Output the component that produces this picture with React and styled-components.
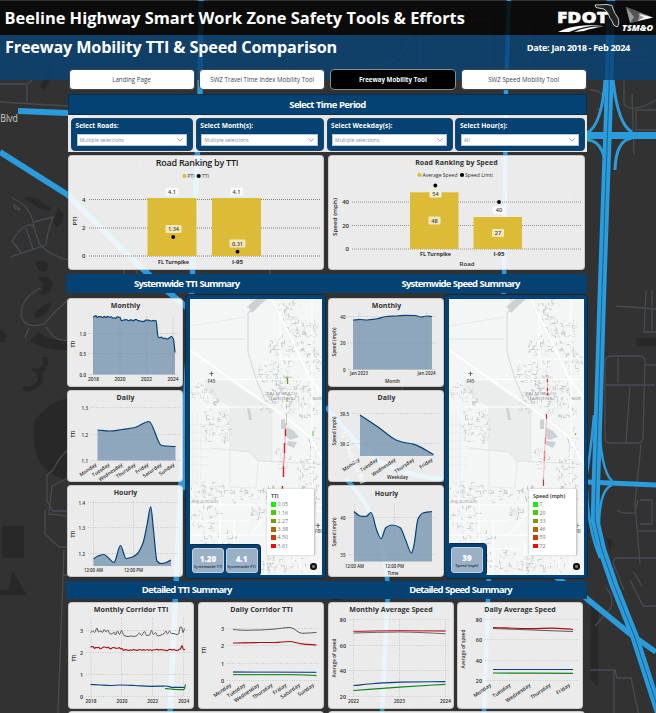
import React from 'react';
import styled, { createGlobalStyle, css } from 'styled-components';

const NAVY = '#044273';
const SANS = '"Open Sans", "Noto Sans", sans-serif';

const Global = createGlobalStyle`
  * { box-sizing: border-box; }
  html, body { margin: 0; padding: 0; background: #323232; }
  body { font-family: ${SANS}; overflow: hidden; }
  svg { display: block; }
  svg text { font-family: ${SANS}; }
`;

const Page = styled.div`
  position: relative;
  width: 656px;
  height: 713px;
  overflow: hidden;
`;

const Backdrop = styled.svg`
  position: absolute;
  inset: 0;
`;

const Content = styled.div`
  position: relative;
  display: flex;
  flex-direction: column;
  padding-top: 1px;
`;

const TopBar = styled.header`
  height: 34px;
  display: flex;
  align-items: center;
  justify-content: space-between;
  padding: 0 1px 0 4.5px;
  background: rgba(6, 6, 6, 0.88);
`;

const TitleText = styled.h1`
  margin: 0;
  color: #fff;
  font-size: 16.4px;
  line-height: 34px;
  font-weight: 700;
  white-space: nowrap;
`;

const SubBar = styled.div`
  height: 45px;
  display: flex;
  align-items: flex-start;
  justify-content: space-between;
  padding: 0 26px 0 5px;
  background: rgba(8, 66, 116, 0.82);
`;

const SubTitle = styled.h2`
  margin: 0;
  color: #fff;
  font-size: 16.2px;
  line-height: 25px;
  font-weight: 700;
  white-space: nowrap;
  letter-spacing: -0.15px;
`;

const DateText = styled.div`
  color: #fff;
  font-size: 9.2px;
  line-height: 26px;
  font-weight: 700;
  white-space: nowrap;
  letter-spacing: -0.36px;
`;

const Board = styled.main`
  display: flex;
  flex-direction: column;
  width: 521px;
  margin: -11px 0 0 66px;
`;

const Tabs = styled.nav`
  display: grid;
  grid-template-columns: repeat(4, 126px);
  column-gap: 4.7px;
  height: 21px;
  padding-left: 2.5px;
`;

const Tab = styled.button`
  padding: 0;
  border: 1px solid ${(p) => (p.$active ? '#8d8d8d' : '#3c4650')};
  border-radius: 4px;
  background: ${(p) => (p.$active ? '#000' : '#fff')};
  color: ${(p) => (p.$active ? '#fff' : '#444')};
  font-family: ${SANS};
  font-size: 6.2px;
  font-weight: ${(p) => (p.$active ? 700 : 500)};
  line-height: 19px;
  white-space: nowrap;
`;

const Band = styled.div`
  display: grid;
  grid-template-columns: ${(p) => (p.$split ? '241.5px 252px' : '1fr')};
  column-gap: 27px;
  margin: ${(p) => p.$margin};
  height: ${(p) => p.$h}px;
  line-height: ${(p) => p.$h}px;
  background: ${NAVY};
  ${(p) => p.$outlined && css`border: 1px solid #06304f; line-height: ${p.$h - 2}px;`}
  color: #fff;
  text-align: center;
  font-size: 9.5px;
  font-weight: 700;
  letter-spacing: ${(p) => (p.$outlined ? '-0.68px' : '-0.8px')};
  word-spacing: 0.6px;
  white-space: nowrap;
`;

const Filters = styled.div`
  display: grid;
  grid-template-columns: 122px 128px 126px 129.5px;
  column-gap: 2.8px;
  height: 37px;
  margin-left: 2px;
  padding: 3px;
  background: rgba(255, 255, 255, 0.88);
`;

const FilterBox = styled.label`
  display: flex;
  flex-direction: column;
  padding: 2px 5px 4px 3.5px;
  border: 1px solid #22435f;
  border-radius: 4px;
  background: ${NAVY};
  color: #fff;
  font-size: 6.6px;
  font-weight: 700;
  line-height: 9px;
`;

const SelectBox = styled.div`
  display: flex;
  align-items: center;
  justify-content: space-between;
  height: 12px;
  margin: 3.5px 0 0 1px;
  padding: 0 3px 0 2px;
  border: 1px solid #b9c6d2;
  background: #fff;
  color: #8a8a8a;
  font-size: 5.1px;
  font-weight: 400;
  line-height: 10px;
`;

const Row = styled.section`
  display: grid;
  grid-template-columns: ${(p) => p.$cols};
  margin: ${(p) => p.$margin};
  height: ${(p) => p.$h}px;
`;

const Panel = styled.article`
  grid-column: ${(p) => p.$col || 'auto'};
  overflow: hidden;
  border: 1px solid rgba(190, 190, 190, 0.75);
  border-radius: 4px;
  background: rgba(255, 255, 255, 0.9);
`;

const PanelTitle = styled.h3`
  margin: 0 0 0 ${(p) => p.$shift || 0}px;
  height: 13px;
  text-align: center;
  white-space: nowrap;
  color: ${(p) => p.$color || '#333'};
  font-size: ${(p) => p.$size || 7}px;
  line-height: ${(p) => p.$line || 13}px;
  font-weight: ${(p) => p.$weight || 700};
  letter-spacing: ${(p) => p.$track || 0}px;
`;

const Stack = styled.div`
  grid-column: ${(p) => p.$col};
  display: grid;
  grid-template-rows: 89px 92px 92px;
  row-gap: 3px;
  padding-top: 3px;
`;

const MapFrame = styled.div`
  grid-column: ${(p) => p.$col};
  position: relative;
  overflow: hidden;
  border: 4px solid ${NAVY};
  border-bottom-width: 3px;
  border-right-width: 3px;
  border-radius: 4px;
  background: #f4f5f5;
  box-shadow: 0 0 0 1px #0a2c49;
`;

const Legend = styled.div`
  position: absolute;
  left: ${(p) => p.$left}px;
  top: 190px;
  width: 48px;
  height: 66px;
  padding: 3px 4px;
  background: #fff;
  border-right: 1px solid #c9c9c9;
  box-shadow: 0 0 2px #bbb;
  color: #222;
  font-size: 5.3px;
  font-weight: 600;
  line-height: 8.3px;
  white-space: nowrap;
`;

const LegendItem = styled.div`
  display: flex;
  align-items: center;
  gap: 2px;
  height: 8.3px;
  color: #777;
  font-weight: 400;
  &::before {
    content: '';
    width: 4.5px;
    height: 4.5px;
    background: ${(p) => p.$color};
  }
`;

const Stats = styled.div`
  position: absolute;
  left: -1px;
  bottom: 0;
  display: flex;
  gap: 1.5px;
  height: ${(p) => p.$h}px;
  padding: 3px 2.5px 2px 3px;
  border-radius: 3px;
  background: ${NAVY};
  box-shadow: 0 0 0 1px #0a2c49;
`;

const Stat = styled.div`
  width: 32px;
  border: 1px solid #c3d0dd;
  border-radius: 3px;
  background: #9ab0c6;
  color: #fff;
  text-align: center;
  font-size: 8px;
  font-weight: 800;
  line-height: 9px;
  padding-top: 4.5px;
  small {
    display: block;
    margin: 1px -4px 0;
    color: #203040;
    font-size: 3.8px;
    line-height: 6px;
    font-weight: 600;
    white-space: nowrap;
  }
`;

const InfoDot = styled.span`
  position: absolute;
  left: ${(p) => p.$left}px;
  top: 264px;
  width: 6.5px;
  height: 6.5px;
  border-radius: 50%;
  border: 2px solid #111;
  background: #777;
`;

const T = ({ x, y, children, size = 5.6, w, weight = 600, fill = '#2e2e2e', anchor = 'middle', rot }) => (
  <text
    x={x}
    y={y}
    fontSize={size}
    fontWeight={weight}
    fill={fill}
    textAnchor={anchor}
    textLength={w}
    lengthAdjust={w ? 'spacingAndGlyphs' : undefined}
    transform={rot ? `rotate(${rot} ${x} ${y})` : undefined}
  >
    {children}
  </text>
);

/* Smooth monotone path through the points */
const curve = (pts) => {
  const n = pts.length;
  const s = [];
  for (let i = 0; i < n - 1; i++) s.push((pts[i + 1][1] - pts[i][1]) / (pts[i + 1][0] - pts[i][0]));
  const m = pts.map((_, i) => {
    if (i === 0) return s[0];
    if (i === n - 1) return s[n - 2];
    return s[i - 1] * s[i] <= 0 ? 0 : (2 * s[i - 1] * s[i]) / (s[i - 1] + s[i]);
  });
  let d = `M${pts[0]}`;
  for (let i = 0; i < n - 1; i++) {
    const h = (pts[i + 1][0] - pts[i][0]) / 3;
    d += `C${pts[i][0] + h},${pts[i][1] + m[i] * h} ${pts[i + 1][0] - h},${pts[i + 1][1] - m[i + 1] * h} ${pts[i + 1]}`;
  }
  return d;
};

const Series = ({ pts, color, width = 1 }) => (
  <path d={curve(pts)} fill="none" stroke={color} strokeWidth={width} />
);

const Area = ({ pts, base }) => (
  <>
    <path
      d={`${curve(pts)}L${pts[pts.length - 1][0]},${base}L${pts[0][0]},${base}Z`}
      fill="#7393ae"
      fillOpacity="0.78"
    />
    <Series pts={pts} color={NAVY} width={1.2} />
  </>
);

const Grid = ({ ys = [], xs = [], x1, x2, y1, y2, tickX, color = '#c6c6c6', dash = '1 1.4', size }) => (
  <g>
    {ys.map(([y, label]) => (
      <React.Fragment key={label}>
        <line x1={x1} x2={x2} y1={y} y2={y} stroke={color} strokeWidth="0.9" strokeDasharray={dash} />
        <T x={tickX} y={y + 2} anchor="end" size={size || 5}>{label}</T>
      </React.Fragment>
    ))}
    {xs.map((x) => (
      <line key={x} x1={x} x2={x} y1={y1} y2={y2} stroke={color} strokeWidth="0.9" strokeDasharray={dash} />
    ))}
  </g>
);

const Chart = ({ box, title, col, children, ...t }) => {
  const [x, y, w, h] = box;
  return (
    <Panel $col={col}>
      <PanelTitle {...t}>{title}</PanelTitle>
      <svg width={w - 2} height={h - 15} viewBox={`${x + 1} ${y + 14} ${w - 2} ${h - 15}`}>
        {children}
      </svg>
    </Panel>
  );
};

const Tag = ({ x, y, w = 13, fill = '#f1e7bd', children }) => (
  <>
    <rect x={x - w / 2} y={y - 4} width={w} height="8" rx="1.2" fill={fill} />
    <T x={x} y={y + 2} size="5.6" fill="#444">{children}</T>
  </>
);

const DAYS = ['Monday', 'Tuesday', 'Wednesday', 'Thursday', 'Friday', 'Saturday', 'Sunday'];
const DayLabels = ({ xs, y, size = 5 }) =>
  xs.map((x, i) => (
    <T key={i} x={x} y={y} size={size} anchor="end" rot={-35}>{DAYS[i]}</T>
  ));

const rng = (seed) => () => {
  seed = (seed + 0x6d2b79f5) | 0;
  let t = Math.imul(seed ^ (seed >>> 15), 1 | seed);
  t = (t + Math.imul(t ^ (t >>> 7), 61 | t)) ^ t;
  return ((t ^ (t >>> 14)) >>> 0) / 4294967296;
};

/* Neighbourhoods: centre x, centre y, radius x, radius y, number of street pieces */
const CLUSTERS = [
  [98, 8, 12, 14, 34], [116, 34, 14, 18, 52], [122, 60, 10, 14, 32], [90, 48, 14, 10, 32],
  [84, 72, 18, 14, 52], [98, 92, 24, 15, 90], [112, 110, 16, 10, 34], [78, 104, 8, 12, 26],
  [8, 92, 9, 8, 20], [23, 98, 6, 8, 20], [18, 124, 5, 20, 26], [34, 128, 7, 18, 40],
  [92, 158, 8, 14, 20], [118, 176, 13, 18, 46], [8, 192, 9, 14, 24], [24, 192, 12, 9, 26],
  [16, 218, 16, 14, 40], [50, 196, 14, 8, 18], [66, 212, 6, 8, 24], [76, 192, 8, 10, 16],
  [28, 238, 20, 9, 28], [78, 266, 8, 10, 36], [50, 262, 18, 13, 38], [118, 212, 14, 20, 30],
  [98, 264, 20, 10, 20], [124, 142, 7, 15, 18], [102, 26, 6, 12, 14], [62, 6, 6, 6, 8],
];

const STREETS = (() => {
  const r = rng(77);
  const dark = [];
  const light = [];
  const step = () => ((r() < 0.5 ? -1 : 1) * (1 + r() * 2.6)).toFixed(1);
  CLUSTERS.forEach(([cx, cy, rx, ry, n]) => {
    for (let i = 0; i < n; i++) {
      const a = r() * 6.283;
      const k = Math.sqrt(r());
      const x = Math.round(cx + Math.cos(a) * rx * k) + 0.5;
      const y = Math.round(cy + Math.sin(a) * ry * k) + 0.5;
      const d = r();
      let seg = `M${x},${y}`;
      if (d < 0.35) seg += `h${step()}v${step()}`;
      else if (d < 0.6) seg += `v${step()}h${step()}`;
      else if (d < 0.75) seg += `h${step()}`;
      else if (d < 0.9) seg += `v${step()}`;
      else seg += `l${step()},${step()}`;
      (r() < 0.42 ? dark : light).push(seg);
    }
  });
  return { dark: dark.join(''), light: light.join('') };
})();

const AreaMap = ({ route }) => (
  <svg width="136" height="276" viewBox="0 0 136 276">
    <rect width="136" height="276" fill="#f4f5f5" />
    <path d="M15,81L38,81L78,108L82,108L82,162L68,162L60,153L40,151L40,108L15,92Z" fill="#ebecec" />
    <g fill="none" strokeWidth="0.9">
      <path d="M77,0L58,14V53L66,80L78,108" stroke="#cfd3d4" />
      <path d="M20,149L60,153L68,162L132,165M56,40H0" stroke="#d8dbdb" strokeWidth="0.7" />
      <path d="M40,108V188L66,189L68,162M82,108V162M0,27L56,18" stroke="#e2e4e4" strokeWidth="0.7" />
      <path d="M3,112V186M7,112V186M11,120V186M0,126H26M0,134H26M0,142H26M0,150H26M0,158H18M0,166H18" stroke="#e6e8e8" strokeWidth="0.6" />
      <path d={STREETS.light} stroke="#dfe2e3" />
      <path d={STREETS.dark} stroke="#c0c8ca" strokeWidth="0.8" />
    </g>
    <path d="M59,6L66,0L76,0L62,14ZM91,121L95,120L95,130L91,130ZM97,128L104,132L109,138L100,141L96,137ZM98,142L107,143L104,149L97,146ZM57,108L60,110L62,121L59,121Z" fill="#ccd2d4" />
    <g fill="none" stroke="#fff" strokeWidth="1.1">
      <path d="M23,80.500H132M15,108H84M0,206H136M0,222H60M0,236H136M30,200V276M44,222V276M104,200V260M122,0V276M0,250H70M60,236L80,212L136,212M90,8V60H136M76,240V276M110,246V276" />
    </g>
    <g fill="none" stroke="#fff" strokeWidth="1.7">
      <path d="M0,51L98,120L120,138L132,160L136,166" />
      <path d="M82,0L102,41L120,79L136,100" />
    </g>
    <path d="M21.500,72.500v4.500M19.300,74.500h4.400M128,224.500v4.500M125.800,226.500h4.400" fill="none" stroke="#555" strokeWidth="0.8" />
    <T x={21.5} y={83.500} size={4.6} fill="#555">F45</T>
    <T x={128.300} y={233.500} size={4.6} fill="#555" w={7}>FBI</T>
    <T x={92} y={96} size={4.2} weight={400} fill="#999" w={31}>PALM BEACH</T>
    <T x={91} y={101} size={4.2} weight={400} fill="#999" w={25}>GARDENS</T>
    <T x={127} y={101} size={4.2} weight={400} fill="#888" w={9}>NOR</T>
    <T x={15} y={204} size={4} weight={400} fill="#aaa" w={27}>THE ACREAGE</T>
    {route.map(([d, c, w], i) => (
      <path key={i} d={d} fill="none" stroke={c} strokeWidth={w || 1} />
    ))}
  </svg>
);

const TTI_ROUTE = [
  ['M97.500,79V85', '#6f9a1f', 1.3], ['M95.500,79l3,-1.500M97,99v4', '#8fae45', 1.2],
  ['M96.500,105v5M96.500,114v12', '#a9d69a', 0.9], ['M95.500,124V130L95,146', '#efa3a3', 0.9],
  ['M95.500,130v7M94.500,144v10M93.500,167v11M92.500,187v4', '#dd1c22', 1.4],
  ['M94.500,154L93.500,167', '#f08a8a', 1.1], ['M123,132v5', '#6cd64c', 1.2],
];
const SPEED_ROUTE = [
  ['M96.500,77h3', '#9aa54a', 1], ['M98.500,79V97', '#eba0a0', 0.8],
  ['M98.500,80v3M98.500,89v3M98.500,94v2M97.500,115v5M96.500,138v7M95.500,152v10M94.500,179v8', '#dc2b30', 1.2],
  ['M97.500,120L96.500,140L95.500,155L94.500,181', '#f0a9a9', 0.8], ['M126.500,134v2', '#8fae45', 1.2],
];
const RAMP = ['#12f312', '#4cc80e', '#789c06', '#a46c04', '#d03a06', '#fb0606'];

const MapCard = ({ col, route, legendLeft, legendTitle, values, stats, statH, pin }) => (
  <MapFrame $col={col}>
    <AreaMap route={route} />
    <Legend $left={legendLeft}>
      {legendTitle}
      {values.map((v, i) => (
        <LegendItem key={v} $color={RAMP[i]}>{v}</LegendItem>
      ))}
    </Legend>
    <Stats $h={statH}>
      {stats.map(([v, label]) => (
        <Stat key={label}>{v}<small>{label}</small></Stat>
      ))}
    </Stats>
    <InfoDot $left={pin} />
  </MapFrame>
);

const wiggle = (x1, x2, n, f) => {
  const r = rng(Math.round(x1 * 31 + n));
  return Array.from({ length: n }, (_, i) => {
    const t = i / (n - 1);
    return [x1 + (x2 - x1) * t, f(t, r)];
  });
};

const monthlyTti = [
  ...wiggle(93, 120, 20, (t, r) => 316.3 + t * 1.5 + (r() - 0.5) * 2),
  ...wiggle(121.5, 156, 24, (t, r) => 320 + t * 1 + (r() - 0.5) * 1.8),
  [158, 336.5], [159.5, 337.8], [161.500, 337], [163, 338.6], [165, 338], [167, 339], [169, 338], [171.500, 336.500], [173.500, 339.500], [175, 352.500],
];
const corridorTop = [
  [90.5, 632.5], [93, 631], [94.5, 632.5], [97, 628], [98.5, 632], [101, 631], [102.500, 632.5], [104, 629.5], [106, 632], [108, 630], [109.500, 633.500], [112, 634], [114, 632], [115.500, 635], [117.500, 631], [119.500, 634.5], [121.5, 630.5], [124, 635.500], [128, 636.500], [131, 636], [134, 636.500], [137, 635.500], [139.500, 633], [141.5, 635.500], [144.5, 631.5], [146.500, 635.5], [149.5, 635], [151.5, 630.5], [153.500, 634.500], [155.5, 632.5], [157.500, 636], [161, 635], [164, 633.500], [166, 631], [167.500, 634], [169.5, 631], [171.500, 633.5], [174, 633.500], [176, 634.500], [178.5, 634], [180.3, 627], [181.5, 627], [183, 632.5], [184.500, 628.5],
];
const corridorMid = [
  ...wiggle(90.5, 122, 24, (t, r) => 647.3 + t * 1.2 + (r() - 0.5) * 2.4),
  ...wiggle(123.5, 179, 34, (t, r) => 650 + (r() - 0.5) * 1.3),
  [180.500, 649], [182, 645.500], [183.500, 649.800], [185, 649.500],
];

const GRAY = '#585858';
const RED = '#a80c10';
const GREEN = '#15831f';
const BLUE = '#07427c';

const RoadMap = () => (
  <Backdrop width="656" height="713" viewBox="0 0 656 713">
    <rect width="656" height="713" fill="#323232" />
    <g fill="#282828">
      <path d="M24,198q14,-3 20,6l8,5q-8,3 -15,-2zM58,208l6,6l-2,8l-5,6l-4,-6l3,-7zM35,263q8,-6 13,2q-1,11 -10,4zM37,278q15,-4 16,7q-3,11 -14,9q9,-10 -2,-16zM34,315q8,-12 17,-12q-2,12 -16,16zM38,332q14,11 30,7v11q-22,1 -38,-9zM35,420q14,-18 33,-22v82q-12,-2 -22,-10q-16,-16 -11,-50zM2,526h22v32h-22zM12,570l15,25h-27v-5h9zM0,330q9,3 5,12h-5z" />
      <path d="M40,86q8,-9 8,-22l6,2q-4,18 -10,24zM636,338h20v8h-19zM607,538l6,2l-3,12zM330,585h12v15h-12zM591,600l7,7v80l-8,-9z" />
      <path d="M45,357q2,14 -8,14q8,8 -1,15q-7,5 -13,2" fill="none" stroke="#282828" strokeWidth="5" />
    </g>
    <g fill="none" stroke="#474b50" strokeWidth="1.3">
      <path d="M0,84H24q6,0 8,-4M27,84v18M0,102L68,106M12,198q20,8 22,30l5,15q9,12 29,17M34,222l19,-5q-6,16 -7,28l-36,12M14,205l6,4q-6,2 -6,-5M12,241q14,-22 22,-14M12,241l10,13M26,228l7,21M40,288q-22,12 -18,30q4,11 22,6q14,-16 24,-24M29,328l-4,10M46,327q10,16 22,13" />
      <path d="M68,450q-8,6 -15,20l-6,5v26l6,10h15M68,478l-16,8l-3,28l19,2M45,510v24l14,13h9M64,550l-6,163M62,575h12" />
      <path d="M195,0h12v15h60q25,8 20,60M140,50q-15,-6 -10,-20h50M260,50h80M340,26q40,-20 70,10q-8,30 -40,30M420,5v60M450,20h40v50M530,24v44M560,48h40v25M624,80v24q8,10 32,-4M632,94l2,60M656,110h-20v20h20M590,90q16,0 14,16l-8,4M616,48h36M616,60h36M640,48v24" />
      <path d="M605,362v76q0,5 5,5h28q5,0 5,-6l2,-76q0,-4 -5,-5h-28q-7,0 -7,6M605,385h50M630,386l-4,57M618,358v25M644,365h12M641,444l-6,60l5,60M616,306l40,3M646,290l-2,42h12M652,290v40M640,500h12v24h-12M617,510q4,4 18,3l3,-13M656,558h-38q-6,0 -4,7l10,25M634,572l8,14M637,531h19M630,580l13,26h13M590,670h25l2,8h14l8,38M614,670v43M606,588q8,8 5,20l-16,18" />
      <path d="M90,155v40q30,8 34,50v35M140,155l-3,120M208,175h40l12,60M270,155v120M300,170h23M350,160q-20,50 10,110M420,158v110M540,160q30,6 30,50t-30,50M330,350h110M345,300v80M410,300l-8,90M350,500h80v40M100,610q8,30 -8,99M110,520q-30,12 -26,50M140,610v99M230,660h90M260,605v104M340,660q60,-30 100,0M480,640h102v60M410,670v40" />
    </g>
    <g fill="none" stroke="#2b9cdb">
      <path d="M201,0L200,94L197,160L192,285L180,500L170,713" strokeWidth="5.500" />
      <path d="M509,0L506,92L504,290L500,320M489,570L484,713M388,590L382,713" strokeWidth="4.500" />
      <path d="M18,111L68,113L88,115" strokeWidth="6" />
      <path d="M0,152L68,195L128,255L160,285L190,310L183,490" strokeWidth="6" />
      <path d="M326,407L363,450Q390,475 450,480M345,478Q388,520 388,600" strokeWidth="4.500" />
      <path d="M611,0L609,90L602,290L598,420L596,480L595,520L602,550L614,585L634,635L660,715" strokeWidth="8.500" />
      <path d="M605,80Q602,125 587,133M613,80Q618,125 632,132M587,140Q602,140 606,165M632,138Q616,140 615,170" strokeWidth="3" />
      <path d="M587,135.500H656" strokeWidth="7" />
      <path d="M587,482L656,485" strokeWidth="5" />
      <path d="M594,415Q589,470 582,500M599,415Q600,470 612,481M612,485Q598,490 599,535M587,490Q588,530 600,558" strokeWidth="2.500" />
      <path d="M550,573L586,598L629,633L656,652" strokeWidth="5.500" />
    </g>
    <path d="M611,0L609,90L602,290L598,420L596,480L595,520L602,550L614,585L634,635L660,715" fill="none" stroke="#176391" strokeWidth="1" />
    <T x={0.300} y={122} size={10} anchor="start" weight={400} fill="#cfcfcf" w={17.500}>Blvd</T>
  </Backdrop>
);

const RoadName = styled.svg`
  position: absolute;
  left: 328px;
  top: 390px;
  pointer-events: none;
`;

const Logos = () => (
  <svg width="100" height="34" viewBox="555 1 100 34">
    <text x="557" y="23.300" fontSize="16.500" fontWeight="800" fill="#fff" stroke="#fff" strokeWidth="0.4" textLength="51" lengthAdjust="spacingAndGlyphs">FDOT</text>
    <path d="M558,32Q572,24 603,25Q582,26 569,32ZM574,32Q586,26 604,26.500Q592,28 584,31Z" fill="#fff" />
    <path d="M595,5L607,4.500L612,5.500L613,9Q615,14 618,18Q620,24 617,27Q613,26 612,21L610,18Q608,11 604,9L596,7.500Z" fill="#222" stroke="#ddd" strokeWidth="0.9" />
    <path d="M626,7L653,17.500L630,23Z" fill="#9a9a9a" />
    <path d="M626,7L640,12.500L638,21L630,23L634,17Z" fill="#555" />
    <path d="M638,14L653,17.500L637,21L644,17.500Z" fill="#fff" />
    <text x="622" y="31" fontSize="9.500" fontWeight="800" fontStyle="italic" fill="#fff" textLength="31" lengthAdjust="spacingAndGlyphs">TSM&amp;O</text>
  </svg>
);

const Chevron = () => (
  <svg width="6" height="4" viewBox="0 0 6 4">
    <path d="M0.500,0.500L3,3.200L5.500,0.500" fill="none" stroke="#777" strokeWidth="0.7" />
  </svg>
);

const FILTERS = [
  ['Select Roads:', 'Multiple selections'],
  ['Select Month(s):', 'Multiple selections'],
  ['Select Weekday(s):', 'Multiple selections'],
  ['Select Hour(s):', 'All'],
];

export default function App() {
  return (
    <Page>
      <Global />
      <RoadMap />
      <Content>
        <TopBar>
          <TitleText>Beeline Highway Smart Work Zone Safety Tools &amp; Efforts</TitleText>
          <Logos />
        </TopBar>
        <SubBar>
          <SubTitle>Freeway Mobility TTI &amp; Speed Comparison</SubTitle>
          <DateText>Date: Jan 2018 - Feb 2024</DateText>
        </SubBar>
        <Board>
          <Tabs>
            <Tab>Landing Page</Tab>
            <Tab>SWZ Travel Time Index Mobility Tool</Tab>
            <Tab $active>Freeway Mobility Tool</Tab>
            <Tab>SWZ Speed Mobility Tool</Tab>
          </Tabs>
          <Band $h={21} $outlined $margin="4px 0 0 2px"><span>Select Time Period</span></Band>
          <Filters>
            {FILTERS.map(([label, value]) => (
              <FilterBox key={label}>
                {label}
                <SelectBox>{value}<Chevron /></SelectBox>
              </FilterBox>
            ))}
          </Filters>

          <Row $h={115} $cols="256px 4px 257px" $margin="3px 0 0 2px">
            <Chart box={[68, 155, 256, 115]} title="Road Ranking by TTI" $size={9} $weight={600} $line={14} $color="#1c1c1c" $shift={2} $track={-0.27}>
              <Grid ys={[[199.500, '4'], [228, '2'], [256, '0']]} x1={89} x2={320} tickX={85.500} color="#777" dash="1 1" size={6} />
              <circle cx="184.500" cy="176" r="2.100" fill="#dcbc37" />
              <T x={187.500} y={178} anchor="start" size={5.4} weight={400} w={7}>PTI</T>
              <circle cx="198.700" cy="176" r="2.100" fill="#000" />
              <T x={202} y={178} anchor="start" size={5.4} weight={400} w={7}>TTI</T>
              <rect x="147.500" y="198" width="49" height="58" fill="#dcbc37" />
              <rect x="212" y="198" width="49" height="58" fill="#dcbc37" />
              <Tag x={172} y={191.500} fill="#fafafa">4.1</Tag>
              <Tag x={236.500} y={191.500} fill="#fafafa">4.1</Tag>
              <Tag x={173.500} y={229} w={16}>1.34</Tag>
              <Tag x={237.500} y={243.500} w={16}>0.31</Tag>
              <circle cx="173.200" cy="237" r="1.900" />
              <circle cx="237.500" cy="251.700" r="1.900" />
              <T x={173.500} y={264} weight={700} w={31}>FL Turnpike</T>
              <T x={237.500} y={264} weight={700} w={11}>I-95</T>
              <T x={77} y={221} rot={-90} size={6}>PTI</T>
            </Chart>
            <Chart col="3" box={[328, 155, 257, 115]} title="Road Ranking by Speed" $size={7} $track={0.08}>
              <Grid ys={[[202, '40'], [225.500, '20'], [249, '0']]} x1={352} x2={582} tickX={349} color="#888" dash="1 1" size={6} />
              <circle cx="419.500" cy="175" r="2.100" fill="#dcbc37" />
              <T x={422.500} y={177} anchor="start" size={5.6} weight={400} w={35}>Average Speed</T>
              <circle cx="462" cy="175" r="2.100" />
              <T x={465} y={177} anchor="start" size={5.6} weight={400} w={28}>Speed Limit</T>
              <rect x="410" y="192.300" width="48.500" height="56.700" fill="#dcbc37" />
              <rect x="473.500" y="217" width="48.500" height="32" fill="#dcbc37" />
              <circle cx="435.300" cy="185.500" r="1.900" />
              <circle cx="499" cy="202" r="1.900" />
              <Tag x={435.500} y={193.500} w={12} fill="#f7f1d8">54</Tag>
              <Tag x={434.500} y={220.500} w={12}>48</Tag>
              <Tag x={499} y={210.300} w={12} fill="#fafafa">40</Tag>
              <Tag x={498} y={233} w={12}>27</Tag>
              <T x={435.500} y={256.300} weight={700} w={31}>FL Turnpike</T>
              <T x={499} y={256.300} weight={700} w={11}>I-95</T>
              <T x={467} y={266.300} size={6} w={15}>Road</T>
              <T x={337} y={217} rot={-90} size={6} w={38}>Speed (mph)</T>
            </Chart>
          </Row>

          <Band $h={19} $split $margin="4px 0 0 0"><span>Systemwide TTI Summary</span><span>Systemwide Speed Summary</span></Band>

          <Row $h={283} $cols="116px 3px 139px 3px 116px 1px 142px" $margin="2px 0 0 1px">
            <Stack $col="1">
              <Chart box={[67, 298, 116, 89]} title="Monthly" $shift={1}>
                <Area base={374.500} pts={monthlyTti} />
                <Grid ys={[[333.500, '1.0'], [353.500, '0.5'], [374.500, '0.0']]} xs={[93.500, 120, 146.500, 173]} x1={88} x2={179} y1={316} y2={375} tickX={86} color="rgba(130,130,130,.4)" size={4.500} />
                {[2018, 2020, 2022, 2024].map((v, i) => <T key={v} x={93.500 + i * 26.500} y={381} size={5.2} w={11}>{v}</T>)}
                <T x={74.500} y={344} rot={-90} size={4.800}>TTI</T>
              </Chart>
              <Chart box={[67, 390, 116, 92]} title="Daily" $shift={1} $track={0.1}>
                <Grid ys={[[407.500, '1.3'], [434.500, '1.2'], [460.500, '1.1']]} x1={91} x2={181} tickX={88} size={4.500} />
                <Area base={460.500} pts={[[97.5, 430], [110, 431], [122, 429.5], [135, 427.5], [149, 421.5], [161.5, 445.5], [175.5, 446.5]]} />
                <DayLabels xs={[97, 110, 123, 136, 149, 162, 175]} y={465.500} />
                <T x={74.500} y={434} rot={-90} size={4.800}>TTI</T>
              </Chart>
              <Chart box={[67, 485, 116, 92]} title="Hourly" $shift={1}>
                <Grid ys={[[502.500, '1.4'], [527.500, '1.3'], [553.500, '1.2']]} xs={[93.500, 133.500]} x1={88} x2={178} y1={501} y2={566} tickX={85} size={4.500} />
                <Area base={566} pts={[[93.5, 559], [98, 556], [104, 554.5], [109, 558.5], [114, 562.5], [120.5, 545.5], [126, 558.5], [131, 557.5], [137, 554], [143, 543], [147, 525], [150.700, 506.8], [153.5, 530], [157, 561], [161, 563.500], [165, 563], [171, 560]]} />
                <T x={93.500} y={572.300} size={4.600} w={19}>12:00 AM</T>
                <T x={133.500} y={572.300} size={4.600} w={19}>12:00 PM</T>
                <T x={74.500} y={534} rot={-90} size={4.800}>TTI</T>
              </Chart>
            </Stack>
            <MapCard
              col="3" route={TTI_ROUTE} legendLeft={77} legendTitle="TTI" pin={120}
              values={['0.05', '1.16', '2.27', '3.38', '4.50', '5.61']}
              stats={[['1.20', 'Systemwide TTI'], ['4.1', 'Systemwide PTI']]} statH={30}
            />
            <Stack $col="5">
              <Chart box={[328, 298, 116, 89]} title="Monthly" $shift={1}>
                <Area base={369.500} pts={[[353, 320], [360, 319.5], [367, 320], [376, 319], [386, 316.5], [397, 316], [405, 315.300], [415, 315.500], [421, 317], [427, 316], [432, 316.500]]} />
                <Grid ys={[[316.500, '40'], [343, '20'], [369.500, '0']]} xs={[359, 426.500]} x1={348} x2={436} y1={313} y2={370} tickX={345.500} color="rgba(130,130,130,.4)" size={4.500} />
                <T x={359} y={375.300} size={4.500} w={18}>Jan 2023</T>
                <T x={426.500} y={375.300} size={4.500} w={18}>Jan 2024</T>
                <T x={392.500} y={383} size={5.200} w={15}>Month</T>
                <T x={335.500} y={342} rot={-90} size={4.800} w={29}>Speed (mph)</T>
              </Chart>
              <Chart box={[328, 390, 116, 92]} title="Daily" $shift={1} $track={0.1}>
                <Grid ys={[[413.500, '39.5'], [443.500, '39.0']]} x1={352} x2={441} tickX={349} size={4.500} />
                <Area base={456} pts={[[360, 415], [378, 427], [396, 440], [404, 442.500], [414, 444.300], [433.500, 454.500]]} />
                <DayLabels xs={[360, 378, 396, 414.500, 433]} y={460.500} />
                <T x={397.500} y={479} size={5.200} w={21}>Weekday</T>
                <T x={335.500} y={431} rot={-90} size={4.800} w={29}>Speed (mph)</T>
              </Chart>
              <Chart box={[328, 485, 116, 92]} title="Hourly" $shift={1} $line={15}>
                <Grid ys={[[517.500, '40'], [554.500, '35']]} xs={[354.500, 394.500]} x1={349} x2={436} y1={504} y2={561} tickX={345.500} size={4.500} />
                <Area base={561.500} pts={[[354, 511.500], [360, 516], [366, 516.500], [371, 512.500], [377, 531], [381, 538.700], [386, 527.500], [392, 525], [400, 527.500], [406, 541], [411.500, 553], [414, 545], [418, 519], [423, 513], [432, 511.500]]} />
                <T x={354.500} y={567.500} size={4.600} w={19}>12:00 AM</T>
                <T x={394.500} y={567.500} size={4.600} w={19}>12:00 PM</T>
                <T x={393} y={575} size={5.200} w={11}>Time</T>
                <T x={335.500} y={532} rot={-90} size={4.800} w={29}>Speed (mph)</T>
              </Chart>
            </Stack>
            <MapCard
              col="7" route={SPEED_ROUTE} legendLeft={80} legendTitle="Speed (mph)" pin={124}
              values={['7', '20', '33', '46', '59', '72']}
              stats={[['39', 'Speed (mph)']]} statH={31}
            />
          </Row>

          <Band $h={18} $split $margin="3px 0 0 0"><span>Detailed TTI Summary</span><span>Detailed Speed Summary</span></Band>

          <Row $h={107} $cols="126px 4px 126px 4px 126px 3px 126px" $margin="3px 0 0 2px">
            <Chart box={[68, 602, 126, 107]} title="Monthly Corridor TTI" $size={7.2}>
              <Grid ys={[[630.500, '3'], [652.500, '2'], [674.500, '1'], [696.500, '0']]} xs={[91, 121.500, 152.500, 183.500]} x1={86} x2={190} y1={618} y2={697} tickX={83} size={5.400} />
              <Series color={GRAY} pts={corridorTop} />
              <Series color={RED} pts={corridorMid} width={1.100} />
              <Series color={BLUE} pts={[[90.500, 684.500], [100, 685], [110, 685.500], [120, 685], [135, 685.500], [150, 686.300], [160, 686.200], [166, 686], [172, 687.300], [185, 687.500]]} width={1.200} />
              <Series color={GREEN} pts={[[165, 688.500], [170, 689], [176, 689.500], [184, 689.700], [185.500, 684.500]]} width={1.200} />
              {[2018, 2020, 2022, 2024].map((v, i) => <T key={v} x={91 + i * 30.900} y={703.300} size={5.200} w={11}>{v}</T>)}
              <T x={75.500} y={658} rot={-90} size={4.800}>TTI</T>
            </Chart>
            <Chart col="3" box={[198, 602, 126, 107]} title="Daily Corridor TTI" $size={7.2} $shift={1}>
              <Grid ys={[[628.500, '3'], [645.500, '2'], [663.500, '1'], [680.500, '0']]} x1={227} x2={319} tickX={224} size={5.400} />
              <Series color={GRAY} pts={[[233, 629.500], [245, 630.300], [260, 630], [275, 629], [290, 627.500], [302, 633.300], [316.500, 632.500]]} />
              <Series color={RED} pts={[[233, 643], [260, 642.500], [275, 642.500], [289, 641.500], [302, 643.800], [316.500, 645]]} width={1.200} />
              <Series color="#2a6190" pts={[[233, 672], [316.500, 672.300]]} width={1.300} />
              <Series color="#2c9036" pts={[[233, 674.700], [290, 674.700], [316.500, 675.500]]} width={1.300} />
              <DayLabels xs={[231.500, 245.500, 259.500, 273, 287, 300.500, 314.500]} y={686} size={5.200} />
              <T x={205.500} y={650} rot={-90} size={4.800}>TTI</T>
            </Chart>
            <Chart col="5" box={[328, 602, 126, 107]} title="Monthly Average Speed" $size={7.1}>
              <Grid ys={[[619.500, '80'], [645.500, '60'], [670.500, '40'], [696.500, '20']]} xs={[353.500, 399.500, 445.500]} x1={349} x2={450} y1={619} y2={697} tickX={346} size={5.400} />
              <Series color="#c23a40" pts={[[353.500, 631.300], [399, 630.700], [445.500, 631]]} width={1.300} />
              <Series color={GRAY} pts={[[353.500, 633], [399, 632], [420, 632.500], [445.500, 633.800]]} width={0.900} />
              <Series color={BLUE} pts={[[353.500, 685.500], [375, 683.500], [400, 682.200], [445.500, 681.600]]} width={1.200} />
              <Series color={GREEN} pts={[[353.500, 690.500], [399.500, 687.200], [445.500, 684.300]]} width={1.200} />
              {[2022, 2023, 2024].map((v, i) => <T key={v} x={353.500 + i * 46} y={703.300} size={5.200} w={11}>{v}</T>)}
              <T x={335.500} y={658} rot={-90} size={4.800} w={39}>Average of speed</T>
            </Chart>
            <Chart col="7" box={[457, 602, 126, 107]} title="Daily Average Speed" $size={7.1}>
              <Grid ys={[[619.500, '80'], [639.500, '60'], [660.500, '40'], [680.500, '20']]} x1={485} x2={579} tickX={482} size={5.400} />
              <Series color={GRAY} pts={[[493, 628.500], [520, 629.500], [545, 630.500], [573, 631.500]]} />
              <Series color={RED} pts={[[493, 627.500], [532, 628.600], [552, 628.200], [573, 629.500]]} width={1.200} />
              <Series color={BLUE} pts={[[493, 669.500], [573, 669.500]]} width={1.200} />
              <Series color={GREEN} pts={[[493, 673], [573, 673.300]]} width={1.200} />
              <DayLabels xs={[491.500, 511, 531, 551, 570.500]} y={686} size={5.200} />
              <T x={464.500} y={649} rot={-90} size={4.800} w={39}>Average of speed</T>
            </Chart>
          </Row>
          <Row $h={20} $cols="256px 4px 257px" $margin="2px 0 0 2px">
            <Panel />
            <Panel $col="3" />
          </Row>
        </Board>
      </Content>
      <RoadName width="116" height="187" viewBox="328 390 116 187">
        <T x={340} y={433} size={8} anchor="start" weight={600} fill="rgba(255,255,255,.8)" rot={68}>N Haverhill Rd</T>
      </RoadName>
    </Page>
  );
}
